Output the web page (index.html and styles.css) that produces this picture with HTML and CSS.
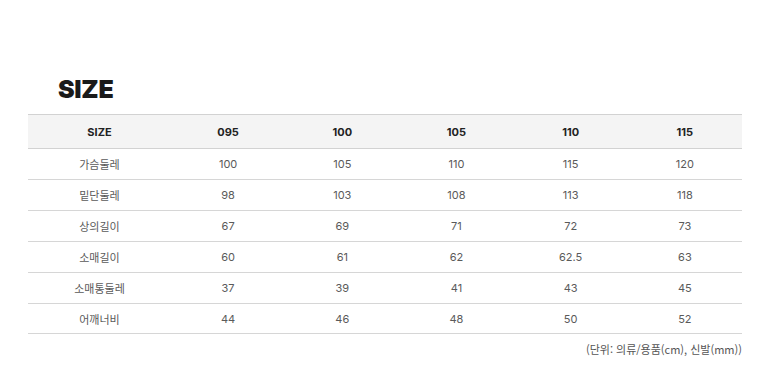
FILE: index.html
```html
<!DOCTYPE html>
<html lang="ko">
<head>
<meta charset="utf-8">
<link rel="stylesheet" href="styles.css">
</head>
<body>
<div class="wrap">
  <h2 class="title">SIZE</h2>
  <table class="size-table">
    <colgroup><col class="c-first"><col><col><col><col><col></colgroup>
    <thead>
      <tr><th>SIZE</th><th>095</th><th>100</th><th>105</th><th>110</th><th>115</th></tr>
    </thead>
    <tbody>
      <tr><td>가슴둘레</td><td>100</td><td>105</td><td>110</td><td>115</td><td>120</td></tr>
      <tr><td>밑단둘레</td><td>98</td><td>103</td><td>108</td><td>113</td><td>118</td></tr>
      <tr><td>상의길이</td><td>67</td><td>69</td><td>71</td><td>72</td><td>73</td></tr>
      <tr><td>소매길이</td><td>60</td><td>61</td><td>62</td><td>62.5</td><td>63</td></tr>
      <tr><td>소매통둘레</td><td>37</td><td>39</td><td>41</td><td>43</td><td>45</td></tr>
      <tr><td>어깨너비</td><td>44</td><td>46</td><td>48</td><td>50</td><td>52</td></tr>
    </tbody>
  </table>
  <p class="note">(단위: 의류/용품(cm), 신발(mm))</p>
</div>
</body>
</html>
```
FILE: styles.css
```css
html, body { margin: 0; padding: 0; background: #fff; }
body { font-family: Inter, "Noto Sans", "Noto Sans CJK KR", sans-serif; }
.wrap { width: 714px; padding: 75px 0 0 28px; }
.title {
  margin: 0 0 11px 30px;
  font-size: 25px;
  line-height: 28px;
  font-weight: 900;
  color: #1a1a1a;
  letter-spacing: -0.3px;
}
.size-table {
  width: 714px;
  border-collapse: collapse;
  table-layout: fixed;
  font-size: 11px;
}
.c-first { width: 143px; }
.size-table th {
  height: 33px;
  background: #f4f4f4;
  border-top: 1px solid #d2d2d2;
  border-bottom: 1px solid #d2d2d2;
  font-weight: 700;
  color: #222;
  padding: 0;
  text-align: center;
}
.size-table td {
  height: 30px;
  border-bottom: 1px solid #d6d6d6;
  color: #5a5a5a;
  padding: 0;
  text-align: center;
  font-weight: 400;
}
.size-table tbody tr:last-child td { height: 29px; }
.note {
  margin: 7px 0 0;
  text-align: right;
  font-size: 11px;
  color: #555;
  font-family: "Noto Sans CJK KR", sans-serif;
}
```
